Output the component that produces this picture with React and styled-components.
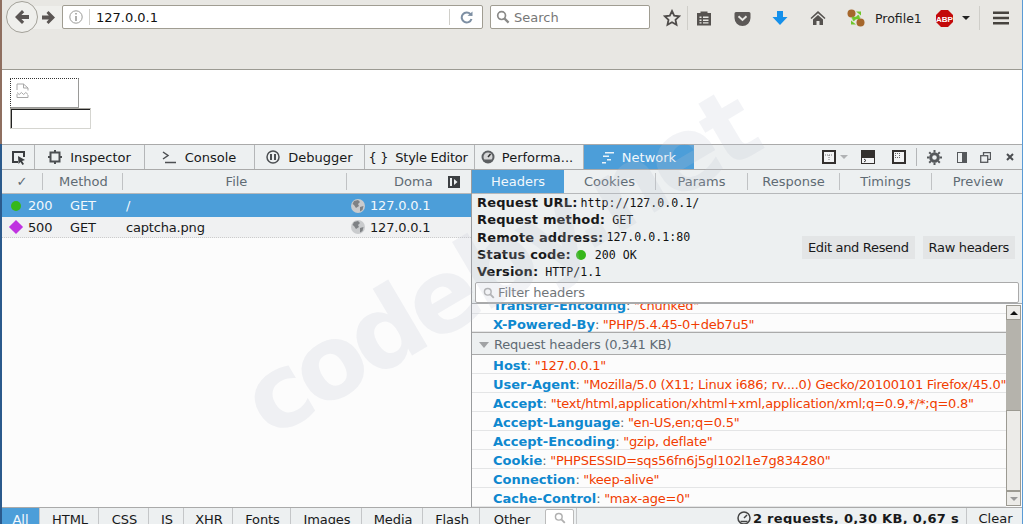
import React from "react"
import styled, { createGlobalStyle } from "styled-components"

const GlobalStyle = createGlobalStyle`
  html, body {
    margin: 0;
    height: 524px;
    overflow: hidden;
    background: #fff;
    font-family: "DejaVu Sans", sans-serif;
  }
  * { box-sizing: border-box; }
`

const Page = styled.div`
  position: relative;
  width: 1023px;
  height: 524px;
  overflow: hidden;
  padding: 0 1px 0 2px;
  background:
    linear-gradient(#8f6f60 0 144px, #2b5a8c 144px) left / 2px 100% no-repeat,
    linear-gradient(#5a9bd5, #5a9bd5) right / 1px 100% no-repeat;
  display: flex;
  flex-direction: column;
`

/* browser chrome */
const Chrome = styled.div`
  height: 70px;
  flex: none;
  background: #e8e7e3;
  border-bottom: 1px solid #9b9a92;
  display: flex;
  align-items: flex-start;
  padding: 1px 0 0 4px;
`
const BackButton = styled.div`
  width: 32px;
  height: 32px;
  flex: none;
  border-radius: 50%;
  border: 1px solid #a3a199;
  background: #efefec;
  display: flex;
  align-items: center;
  justify-content: center;
  z-index: 1;
`
const ForwardButton = styled.div`
  width: 29px;
  height: 23px;
  flex: none;
  margin: 5px 0 0 -5px;
  padding-left: 9px;
  background: #efefec;
  display: flex;
  align-items: center;
  justify-content: flex-start;
`
const UrlBar = styled.div`
  width: 421px;
  height: 24px;
  flex: none;
  margin-top: 4px;
  background: #fff;
  border: 1px solid #a09d92;
  border-radius: 2px;
  display: flex;
  align-items: center;
  font-size: 13px;
  color: #111;
`
const InfoSlot = styled.div`
  width: 27px;
  height: 16px;
  padding-left: 6px;
  border-right: 1px solid #d0cfca;
  display: flex;
  align-items: center;
  flex: none;
`
const UrlText = styled.span`
  margin-left: 6px;
  flex: 1;
`
const ReloadSlot = styled.div`
  width: 33px;
  height: 16px;
  padding-left: 10px;
  border-left: 1px solid #d0cfca;
  display: flex;
  align-items: center;
  flex: none;
`
const SearchBar = styled.div`
  width: 160px;
  height: 24px;
  flex: none;
  margin: 4px 0 0 7px;
  padding-left: 5px;
  gap: 4px;
  background: #fff;
  border: 1px solid #a09d92;
  border-radius: 2px;
  display: flex;
  align-items: center;
  font-size: 13px;
  color: #777;
`
const ChromeIcons = styled.div`
  flex: 1;
  height: 30px;
  margin-top: 2px;
  display: flex;
  align-items: center;
`
const ChromeSlot = styled.div`
  width: ${p => p.$w}px;
  height: 24px;
  flex: none;
  display: flex;
  align-items: center;
  justify-content: center;
  padding-left: ${p => p.$pad ?? 0}px;
  ${p => p.$line && "border-right: 1px solid #cfcec9;"}
`
const ProfileName = styled.span`
  font-size: 12.5px;
  color: #222;
  width: 61px;
  margin-left: 3px;
  flex: none;
`

/* page under test */
const Viewport = styled.div`
  height: 74px;
  flex: none;
  background: #fff;
  padding: 8px 0 0 8px;
`
const BrokenImage = styled.div`
  width: 69px;
  height: 30px;
  border: 1px solid;
  border-style: dotted solid solid dotted;
  border-color: #333 #9a9a98 #9a9a98 #333;
  padding: 4px 0 0 5px;
`
const CaptchaInput = styled.div`
  width: 81px;
  height: 21px;
  border: 1px solid;
  border-color: #a8a6a0 #d5d5d0 #d5d5d0 #a8a6a0;
  box-shadow: inset 1px 1px 0 #222;
  background: #fff;
`

/* devtools */
const DevTools = styled.div`
  flex: 1;
  display: flex;
  flex-direction: column;
  min-height: 0;
  border-top: 1px solid #aaa;
  color: #18191a;
`
const ToolTabs = styled.div`
  height: 25px;
  flex: none;
  background: #edf0f1;
  border-bottom: 1px solid #aaa;
  display: flex;
  font-size: 13px;
`
const ToolTab = styled.div`
  width: ${p => p.$w}px;
  flex: none;
  display: flex;
  align-items: center;
  justify-content: center;
  gap: ${p => p.$gap ?? 7}px;
  padding-right: ${p => p.$pr ?? 0}px;
  letter-spacing: ${p => p.$track ?? 0}px;
  border-right: 1px solid ${p => (p.$active ? "#4c9ed9" : "#b4b6b8")};
  background: ${p => (p.$active ? "#4c9ed9" : "transparent")};
  color: ${p => (p.$active ? "#f2f8fc" : "#18191a")};
`
const ToolIcons = styled.div`
  flex: 1;
  display: flex;
  align-items: center;
  padding-left: 128px;
`
const ToolIcon = styled.div`
  width: ${p => p.$w}px;
  height: 18px;
  flex: none;
  display: flex;
  align-items: center;
  gap: 4px;
  justify-content: ${p => (p.$start ? "flex-start" : "center")};
  ${p => p.$line && "border-right: 1px solid #b4b6b8;"}
`
const Split = styled.div`
  flex: 1;
  display: flex;
  min-height: 0;
`
const LeftPane = styled.div`
  width: 469px;
  flex: none;
  background: #fcfcfc;
  display: flex;
  flex-direction: column;
`
const TableHead = styled.div`
  height: 24px;
  flex: none;
  background: #edf0f1;
  border-bottom: 1px solid #b6b8ba;
  display: flex;
  align-items: center;
  font-size: 13px;
  color: #5f6b74;
`
const HeadCell = styled.div`
  width: ${p => p.$w}px;
  flex: none;
  height: 17px;
  display: flex;
  align-items: center;
  padding-left: ${p => p.$pad ?? 0}px;
  ${p => p.$center && "justify-content: center;"}
  ${p => p.$line && "border-right: 1px solid #c0c2c4;"}
`
const CollapseToggle = styled.span`
  margin-left: 15px;
  display: flex;
`
const RequestRow = styled.div`
  height: ${p => p.$h}px;
  flex: none;
  display: flex;
  align-items: center;
  font-size: 13px;
  letter-spacing: -0.18px;
  background: ${p => (p.$selected ? "#4c9ed9" : "#f0f1f2")};
  color: ${p => (p.$selected ? "#f2f8fc" : "#18191a")};
  ${p => !p.$selected && "border-bottom: 1px dotted #ccc;"}
`
const StatusSlot = styled.div`
  width: 26px;
  flex: none;
  display: flex;
  justify-content: center;
  padding-left: 1px;
`
const RowCell = styled.div`
  width: ${p => p.$w}px;
  flex: none;
  display: flex;
  align-items: center;
  gap: ${p => p.$gap ?? 0}px;
`
const Dot = styled.span`
  width: 10px;
  height: 10px;
  border-radius: 50%;
  background: #36b71a;
  display: inline-block;
  flex: none;
`
const Diamond = styled.span`
  width: 10px;
  height: 10px;
  background: #bf33e0;
  transform: rotate(45deg);
  display: inline-block;
`

const RightPane = styled.div`
  flex: 1;
  display: flex;
  flex-direction: column;
  border-left: 1px solid #9a9c9e;
  min-width: 0;
`
const DetailTabs = styled.div`
  height: 24px;
  flex: none;
  display: flex;
  background: #edf0f1;
  border-bottom: 1px solid #b6b8ba;
  font-size: 13px;
  color: #5f6b74;
`
const DetailTab = styled.div`
  width: 92px;
  flex: none;
  display: flex;
  align-items: center;
  justify-content: center;
  background: ${p => (p.$active ? "#4c9ed9" : "transparent")};
  color: ${p => (p.$active ? "#f2f8fc" : "#5f6b74")};
  ${p => p.$line && "border-right: 1px solid #c0c2c4; height: 17px; align-self: center;"}
`
const Summary = styled.div`
  height: 110px;
  flex: none;
  background: #edf0f1;
  border-bottom: 1px solid #a8aaac;
  display: flex;
  flex-direction: column;
  padding: 0 3px;
`
const SummaryBody = styled.div`
  height: 88px;
  flex: none;
  display: flex;
  justify-content: space-between;
  align-items: flex-start;
`
const SummaryLines = styled.div`
  display: flex;
  flex-direction: column;
  padding-left: 2px;
`
const SummaryLine = styled.div`
  height: 17.3px;
  display: flex;
  align-items: center;
  gap: 3px;
  white-space: nowrap;
`
const SummaryLabel = styled.span`
  font-weight: 700;
  font-size: 13px;
  color: #18191a;
  letter-spacing: 0.15px;
`
const SummaryValue = styled.span`
  font-family: "DejaVu Sans Mono", monospace;
  font-size: 11.6px;
  color: #111;
  margin-left: ${p => p.$m ?? 0}px;
`
const StatusDot = styled(Dot)`
  margin: 0 6px 0 2px;
`
const ResendButtons = styled.div`
  display: flex;
  gap: 8px;
  margin: 42px 4px 0 0;
`
const ResendButton = styled.div`
  height: 23px;
  padding: 0 6px;
  background: #e3e5e6;
  font-size: 13px;
  letter-spacing: -0.33px;
  color: #18191a;
  display: flex;
  align-items: center;
`
const FilterInput = styled.div`
  height: 21px;
  flex: none;
  background: #fff;
  border: 1px solid #aaa;
  border-radius: 2px;
  padding-left: 7px;
  gap: 3px;
  display: flex;
  align-items: center;
  font-size: 13px;
  letter-spacing: -0.15px;
  color: #6f7478;
`
const ListArea = styled.div`
  flex: 1;
  display: flex;
  min-height: 0;
  background: #fcfcfc;
`
const HeaderList = styled.div`
  flex: 1;
  overflow: hidden;
  min-width: 0;
`
const HeaderRow = styled.div`
  height: ${p => p.$h ?? 19}px;
  padding: 3px 0 0 21px;
  border-bottom: 1px solid #e4e5e6;
  display: flex;
  align-items: center;
  font-size: 13px;
  white-space: nowrap;
  margin-top: ${p => p.$clip ?? 0}px;
`
const HeaderName = styled.span`
  font-weight: 700;
  color: #0e88cf;
`
const HeaderValue = styled.span`
  color: #f13c00;
  margin-left: 3.5px;
  letter-spacing: -0.23px;
`
const Colon = styled.span`
  color: #5f6b74;
`
const SectionRow = styled.div`
  height: 23px;
  background: #edf0f1;
  border-top: 1px solid #aaa;
  border-bottom: 1px solid #aaa;
  padding: 2px 0 0 7px;
  display: flex;
  align-items: center;
  gap: 5px;
  font-size: 13px;
  letter-spacing: -0.2px;
  color: #5f6b74;
`
const Caret = styled.span`
  width: 0;
  height: 0;
  border-left: 5px solid transparent;
  border-right: 5px solid transparent;
  border-top: 6px solid #a0a2a4;
`
const ScrollBar = styled.div`
  width: 15px;
  flex: none;
  display: flex;
  flex-direction: column;
  background: #b5b3ac;
  margin: 1px 1px 1px 0;
`
const ScrollArrow = styled.div`
  height: 15px;
  flex: none;
  background: #ecebe8;
  border: 1px solid #9c9a92;
  display: flex;
  align-items: center;
  justify-content: center;
`
const ScrollTrack = styled.div`
  flex: 1;
  display: flex;
  flex-direction: column;
  justify-content: flex-end;
`
const ScrollThumb = styled.div`
  height: 81px;
  background: #ecebe8;
  border: 1px solid #9c9a92;
`
const ArrowGlyph = styled.span`
  width: 0;
  height: 0;
  border-left: 4px solid transparent;
  border-right: 4px solid transparent;
  ${p => (p.$down ? `border-top: 4px solid ${p.$color};` : `border-bottom: 4px solid ${p.$color};`)}
`

/* filter bar, cut off by the window bottom */
const FilterBar = styled.div`
  height: 17px;
  flex: none;
  background: #edf0f1;
  border-top: 1px solid #aaa;
  display: flex;
  font-size: 13px;
  color: #18191a;
  overflow: hidden;
`
const FilterTab = styled.div`
  width: ${p => p.$w}px;
  height: 22px;
  flex: none;
  display: flex;
  align-items: center;
  justify-content: center;
  padding-left: ${p => (p.$active ? 0 : 2)}px;
  letter-spacing: -0.1px;
  background: ${p => (p.$active ? "#4c9ed9" : "transparent")};
  color: ${p => (p.$active ? "#f2f8fc" : "#18191a")};
  ${p => !p.$last && "border-right: 1px solid #c4c6c8;"}
`
const FilterSearch = styled.div`
  width: 29px;
  height: 22px;
  flex: none;
  margin: 1px 2px 0 3px;
  background: #fff;
  border: 1px solid #bbb;
  border-radius: 2px;
  display: flex;
  justify-content: center;
  padding-top: 2px;
`
const FilterDivider = styled.div`
  width: 1px;
  background: #c4c6c8;
  flex: none;
`
const Totals = styled.div`
  flex: 1;
  display: flex;
  align-items: flex-start;
  justify-content: flex-end;
  gap: 2px;
  padding: 3px 7px 0 0;
  font-weight: 700;
  letter-spacing: 0.31px;
`
const ClearButton = styled.div`
  width: 56px;
  flex: none;
  border-left: 1px solid #c4c6c8;
  display: flex;
  justify-content: center;
  padding: 3px 0 0 2px;
`

const Watermark = styled.div`
  position: absolute;
  left: 252px;
  top: 358px;
  font-family: "DejaVu Sans", sans-serif;
  font-weight: 700;
  font-size: 102px;
  line-height: 1;
  letter-spacing: -6px;
  color: rgba(190, 196, 208, 0.2);
  transform: rotate(-30.5deg);
  transform-origin: left center;
  pointer-events: none;
  white-space: nowrap;
  z-index: 5;
`

const Icon = ({ w = 16, h = 16, children }) => (
  <svg width={w} height={h} viewBox={`0 0 ${w} ${h}`}>{children}</svg>
)

const Magnifier = ({ color = "#8a8a88", size = 14 }) => (
  <svg width={size} height={size} viewBox="0 0 14 14" fill="none">
    <circle cx="5.6" cy="5.6" r="3.9" stroke={color} strokeWidth="1.7" />
    <path d="M8.6 8.6 12.6 12.6" stroke={color} strokeWidth="2.2" />
  </svg>
)

const Globe = () => (
  <svg width="14" height="14" viewBox="0 0 14 14" style={{ flex: "none" }}>
    <circle cx="7" cy="7" r="7" fill="#c9cbcd" />
    <path d="M3 2 7 1 9 3 7 5 8 7 5 9 3 6 1.5 5Z M9 8 12.5 7 11.5 11 9 12.5Z" fill="#7f8285" />
  </svg>
)

const requests = [
  { status: "200", method: "GET", file: "/", selected: true, h: 23 },
  { status: "500", method: "GET", file: "captcha.png", h: 21 },
]

const requestHeaders = [
  { name: "Host", value: "\"127.0.0.1\"" },
  { name: "User-Agent", value: "\"Mozilla/5.0 (X11; Linux i686; rv....0) Gecko/20100101 Firefox/45.0\"" },
  { name: "Accept", value: "\"text/html,application/xhtml+xml,application/xml;q=0.9,*/*;q=0.8\"" },
  { name: "Accept-Language", value: "\"en-US,en;q=0.5\"" },
  { name: "Accept-Encoding", value: "\"gzip, deflate\"" },
  { name: "Cookie", value: "\"PHPSESSID=sqs56fn6j5gl102l1e7g834280\"" },
  { name: "Connection", value: "\"keep-alive\"" },
  { name: "Cache-Control", value: "\"max-age=0\"" },
]

const filterTabs = [
  ["All", 38], ["HTML", 59], ["CSS", 50], ["JS", 35], ["XHR", 49],
  ["Fonts", 58], ["Images", 71], ["Media", 61], ["Flash", 57], ["Other", 62],
]

const Header = ({ name, value, clip, h }) => (
  <HeaderRow $clip={clip} $h={h}>
    <HeaderName>{name}</HeaderName>
    <Colon>:</Colon>
    <HeaderValue>{value}</HeaderValue>
  </HeaderRow>
)

const App = () => (
  <Page>
    <GlobalStyle />
    <Chrome>
      <BackButton>
        <Icon w={14} h={14}>
          <path d="M7 0 0 7l7 7 2.200-2.200L6.400 9H14V5H6.400L9.200 2.200Z" fill="#5a5553" />
        </Icon>
      </BackButton>
      <ForwardButton>
        <Icon w={13} h={13}>
          <path d="M6.500 0 13 6.500 6.500 13l-2-2L6.800 8.500H0v-4h6.800L4.500 2Z" fill="#5a5553" />
        </Icon>
      </ForwardButton>
      <UrlBar>
        <InfoSlot>
          <Icon w={14} h={14}>
            <circle cx="7" cy="7" r="6.200" fill="none" stroke="#9b9b98" />
            <path d="M6.300 3h1.400v1.500H6.300ZM6.300 6h1.400v5H6.300Z" fill="#8e8e8b" />
          </Icon>
        </InfoSlot>
        <UrlText>127.0.0.1</UrlText>
        <ReloadSlot>
          <Icon w={13} h={13}>
            <path d="M10.500 3.200A5 5 0 1 0 11.500 8" fill="none" stroke="#7d8fa3" strokeWidth="2" />
            <path d="M7.500 4.800 12.500 5 12.500 0.500Z" fill="#7d8fa3" />
          </Icon>
        </ReloadSlot>
      </UrlBar>
      <SearchBar>
        <Magnifier />
        Search
      </SearchBar>
      <ChromeIcons>
        <ChromeSlot $w={38} $pad={6} $line>
          <Icon w={18} h={18}>
            <path d="M9 2l2.200 4.700 5 .6-3.700 3.500 1 5L9 13.300 4.500 15.800l1-5L1.800 7.300l5-.6Z" fill="none" stroke="#4f4c4a" strokeWidth="1.800" />
          </Icon>
        </ChromeSlot>
        <ChromeSlot $w={32}>
          <Icon w={16} h={16}>
            <path d="M1 3h3.500V1.500h7V3H15v12.500H1Z" fill="#55524f" />
            <path d="M3.500 6.500h2v1.500h-2ZM7 6.500h5.500v1.500H7ZM3.500 9.500h2V11h-2ZM7 9.500h5.500V11H7ZM3.500 12.300h2v1.300h-2ZM7 12.300h5.500v1.300H7Z" fill="#e8e7e3" />
          </Icon>
        </ChromeSlot>
        <ChromeSlot $w={44}>
          <Icon w={17} h={15}>
            <path d="M2 1h13a1.500 1.500 0 0 1 1.500 1.500V7a8 8 0 0 1-16 0V2.500A1.500 1.500 0 0 1 2 1Z" fill="#5c5957" />
            <path d="M4.500 5.300 8.500 9l4-3.700" fill="none" stroke="#e8e7e3" strokeWidth="2" />
          </Icon>
        </ChromeSlot>
        <ChromeSlot $w={32}>
          <Icon w={16} h={16}>
            <path d="M5 1h6v6h4.500L8 15 .5 7H5Z" fill="#1590ea" />
          </Icon>
        </ChromeSlot>
        <ChromeSlot $w={44}>
          <Icon w={16} h={16}>
            <path d="M8 1 .5 8l1 1L8 3.200 14.500 9l1-1Z" fill="#55524f" />
            <path d="M3 9.500 8 5l5 4.500V15H9.500v-4h-3v4H3Z" fill="#55524f" />
          </Icon>
        </ChromeSlot>
        <ChromeSlot $w={32}>
          <Icon w={18} h={18}>
            <circle cx="4.500" cy="4.500" r="4" fill="#a5672c" />
            <circle cx="13.500" cy="13.500" r="4" fill="#a5672c" />
            <path d="M5 8.500c3 1.500 5 .5 7-2M13 9.500c-3-1.500-5-.5-7 2" fill="none" stroke="#6fc72a" strokeWidth="2.200" />
            <path d="M9 2.500h5v4ZM9 15.500H4v-4Z" fill="#6fc72a" />
          </Icon>
        </ChromeSlot>
        <ProfileName>Profile1</ProfileName>
        <ChromeSlot $w={16}>
          <svg width="17" height="17" viewBox="0 0 17 17" style={{ flex: "none" }}>
            <path d="M5 0h7l5 5v7l-5 5H5l-5-5V5Z" fill="#c30a0a" />
            <text x="8.500" y="11.500" textAnchor="middle" fontFamily="Liberation Sans" fontWeight="700" fontSize="8" fill="#fff">ABP</text>
          </svg>
        </ChromeSlot>
        <ChromeSlot $w={28} $line>
          <ArrowGlyph $down $color="#222" />
        </ChromeSlot>
        <ChromeSlot $w={42}>
          <Icon w={18} h={16}>
            <path d="M1 1.500h16v2.600H1ZM1 6.700h16v2.600H1ZM1 11.900h16v2.600H1Z" fill="#47443f" />
          </Icon>
        </ChromeSlot>
      </ChromeIcons>
    </Chrome>

    <Viewport>
      <BrokenImage>
        <Icon w={13} h={15}>
          <path d="M1 7V1h6.500L12 5v2.500M7.500 1v4H12M1 9.500l2.200 2 2.200-2 2.200 2 2.200-2 2.200 2M1 11v3.500h11V12" fill="none" stroke="#a8a8a8" />
        </Icon>
      </BrokenImage>
      <CaptchaInput />
    </Viewport>

    <DevTools>
      <ToolTabs>
        <ToolTab $w={33}>
          <Icon w={15} h={15}>
            <path d="M13 7V2H2v10h5" fill="none" stroke="#3a3d40" strokeWidth="2" />
            <path d="M7 6l7 4-3 1 2 3-1.500 1-2-3-2 2Z" fill="#3a3d40" />
          </Icon>
        </ToolTab>
        <ToolTab $w={110} $gap={8}>
          <Icon w={14} h={14}>
            <rect x="2.500" y="2.500" width="9" height="9" fill="none" stroke="#4c4f52" strokeWidth="2" />
            <path d="M7 0v2M7 12v2M0 7h2M12 7h2" stroke="#4c4f52" strokeWidth="2" />
          </Icon>
          Inspector
        </ToolTab>
        <ToolTab $w={110} $gap={9} $pr={1}>
          <Icon w={14} h={14}>
            <path d="M1 2l5 3.500-5 3.500" fill="none" stroke="#4c4f52" strokeWidth="1.500" />
            <path d="M3 12.500h11" stroke="#4c4f52" strokeWidth="1.500" />
          </Icon>
          Console
        </ToolTab>
        <ToolTab $w={110} $gap={8}>
          <Icon w={14} h={14}>
            <circle cx="7" cy="7" r="6" fill="none" stroke="#4c4f52" strokeWidth="1.500" />
            <path d="M5 4v6M9 4v6" stroke="#4c4f52" strokeWidth="2" />
          </Icon>
          Debugger
        </ToolTab>
        <ToolTab $w={110} $gap={7} $track={-0.25} $pr={3}>
          <span>{"{ }"}</span>
          Style Editor
        </ToolTab>
        <ToolTab $w={109} $pr={4}>
          <Icon w={14} h={14}>
            <circle cx="7" cy="7" r="6.500" fill="#5c5f62" />
            <circle cx="7" cy="7" r="4.500" fill="#d5d6d7" />
            <path d="M7 7l2.500-3" stroke="#333" strokeWidth="1.500" />
            <path d="M3 9.500h8L9.500 12h-5Z" fill="#5c5f62" />
          </Icon>
          Performa...
        </ToolTab>
        <ToolTab $w={110} $active $gap={7}>
          <Icon w={14} h={13}>
            <path d="M4 1h9v1.500H4ZM2 4.500h6V6H2ZM6 8h4v1.500H6ZM1 11h4v1.500H1Z" fill="#eaf3fa" />
          </Icon>
          Network
        </ToolTab>
        <ToolIcons>
          <ToolIcon $w={39} $start>
            <Icon w={14} h={14}>
              <rect x="1" y="1" width="12" height="12" fill="#f3f4f5" stroke="#33302e" strokeWidth="2" />
              <path d="M3 5h8M7 5v6" stroke="#777" strokeDasharray="1 1" />
            </Icon>
            <ArrowGlyph $down $color="#b0b2b4" />
          </ToolIcon>
          <ToolIcon $w={31} $start>
            <Icon w={14} h={14}>
              <rect x="0" y="0" width="14" height="14" fill="#33302e" />
              <rect x="1" y="8" width="12" height="5" fill="#f3f4f5" />
              <path d="M3 9l2 1.500L3 12" fill="none" stroke="#333" />
            </Icon>
          </ToolIcon>
          <ToolIcon $w={25} $start $line>
            <Icon w={14} h={14}>
              <rect x="1" y="1" width="12" height="12" fill="#f3f4f5" stroke="#33302e" strokeWidth="2" />
              <path d="M3 3.500h5M3 5.500h1M7 5.500h1M3 7.500h5" stroke="#666" strokeDasharray="1 1" />
            </Icon>
          </ToolIcon>
          <ToolIcon $w={34}>
            <svg width="15" height="15" viewBox="0 0 15 15">
              <circle cx="7.500" cy="7.500" r="3.800" fill="none" stroke="#55585b" strokeWidth="3" />
              <path d="M7.500 0v15M0 7.500h15M2.200 2.200l10.600 10.600M12.800 2.200 2.200 12.800" stroke="#55585b" strokeWidth="2" strokeDasharray="2.400 10.200 2.400" />
            </svg>
          </ToolIcon>
          <ToolIcon $w={22}>
            <Icon w={10} h={11}>
              <rect x=".5" y=".5" width="9" height="10" fill="none" stroke="#55585b" />
              <rect x="5" y="1" width="4.500" height="9" fill="#55585b" />
            </Icon>
          </ToolIcon>
          <ToolIcon $w={24}>
            <Icon w={11} h={11}>
              <path d="M3.500 3V.7h7v6.600H8" fill="none" stroke="#55585b" strokeWidth="1.300" />
              <rect x=".7" y="3.700" width="7" height="6.600" fill="none" stroke="#55585b" strokeWidth="1.300" />
            </Icon>
          </ToolIcon>
          <ToolIcon $w={26}>
            <Icon w={8} h={8}>
              <path d="M1 1l6 6M7 1 1 7" stroke="#4a4d50" strokeWidth="2" />
            </Icon>
          </ToolIcon>
        </ToolIcons>
      </ToolTabs>

      <Split>
        <LeftPane>
          <TableHead>
            <HeadCell $w={41} $center $line>✓</HeadCell>
            <HeadCell $w={80} $pad={16} $line>Method</HeadCell>
            <HeadCell $w={224} $pad={4} $center $line>File</HeadCell>
            <HeadCell $w={124} $pad={47}>
              Doma
              <CollapseToggle>
                <Icon w={12} h={12}>
                  <rect width="12" height="12" fill="#3c3f42" />
                  <rect x="2" y="2" width="2" height="8" fill="#edf0f1" />
                  <path d="M6 3l3.500 3L6 9Z" fill="#edf0f1" />
                </Icon>
              </CollapseToggle>
            </HeadCell>
          </TableHead>
          {requests.map(r => (
            <RequestRow key={r.status} $selected={r.selected} $h={r.h}>
              <StatusSlot>{r.selected ? <Dot /> : <Diamond />}</StatusSlot>
              <RowCell $w={42}>{r.status}</RowCell>
              <RowCell $w={56}>{r.method}</RowCell>
              <RowCell $w={225}>{r.file}</RowCell>
              <RowCell $w={110} $gap={5}><Globe />127.0.0.1</RowCell>
            </RequestRow>
          ))}
        </LeftPane>
        <RightPane>
          <DetailTabs>
            <DetailTab $active>Headers</DetailTab>
            <DetailTab $line>Cookies</DetailTab>
            <DetailTab $line>Params</DetailTab>
            <DetailTab $line>Response</DetailTab>
            <DetailTab $line>Timings</DetailTab>
            <DetailTab>Preview</DetailTab>
          </DetailTabs>
          <Summary>
            <SummaryBody>
              <SummaryLines>
                <SummaryLine><SummaryLabel>Request URL:</SummaryLabel><SummaryValue>http://127.0.0.1/</SummaryValue></SummaryLine>
                <SummaryLine><SummaryLabel>Request method:</SummaryLabel><SummaryValue $m={4}>GET</SummaryValue></SummaryLine>
                <SummaryLine><SummaryLabel>Remote address:</SummaryLabel><SummaryValue>127.0.0.1:80</SummaryValue></SummaryLine>
                <SummaryLine><SummaryLabel>Status code:</SummaryLabel><StatusDot /><SummaryValue>200 OK</SummaryValue></SummaryLine>
                <SummaryLine><SummaryLabel>Version:</SummaryLabel><SummaryValue $m={4}>HTTP/1.1</SummaryValue></SummaryLine>
              </SummaryLines>
              <ResendButtons>
                <ResendButton>Edit and Resend</ResendButton>
                <ResendButton>Raw headers</ResendButton>
              </ResendButtons>
            </SummaryBody>
            <FilterInput>
              <Magnifier color="#b0b0b0" size={12} />
              Filter headers
            </FilterInput>
          </Summary>
          <ListArea>
            <HeaderList>
              <Header name="Transfer-Encoding" value={"\"chunked\""} clip={-9} />
              <Header name="X-Powered-By" value={"\"PHP/5.4.45-0+deb7u5\""} h={18} />
              <SectionRow><Caret />Request headers (0,341 KB)</SectionRow>
              {requestHeaders.map(h => <Header key={h.name} {...h} />)}
            </HeaderList>
            <ScrollBar>
              <ScrollArrow><ArrowGlyph $color="#111" /></ScrollArrow>
              <ScrollTrack><ScrollThumb /></ScrollTrack>
              <ScrollArrow><ArrowGlyph $down $color="#999" /></ScrollArrow>
            </ScrollBar>
          </ListArea>
        </RightPane>
      </Split>

      <FilterBar>
        {filterTabs.map(([label, w], i) => (
          <FilterTab key={label} $w={w} $active={i === 0} $last={label === "Other"}>{label}</FilterTab>
        ))}
        <FilterSearch><Magnifier color="#b0b0b0" size={12} /></FilterSearch>
        <FilterDivider />
        <Totals>
          <Icon w={14} h={14}>
            <circle cx="7" cy="7" r="6" fill="none" stroke="#444" strokeWidth="1.500" />
            <path d="M7 7l3-3M3.500 10.500h7" stroke="#444" strokeWidth="1.500" />
          </Icon>
          2 requests, 0,30 KB, 0,67 s
        </Totals>
        <ClearButton>Clear</ClearButton>
      </FilterBar>
    </DevTools>
    <Watermark>codeby.net</Watermark>
  </Page>
)

export default App
